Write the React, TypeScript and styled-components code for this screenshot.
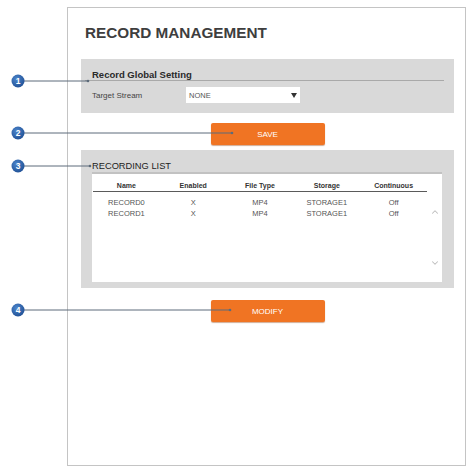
import * as React from "react"
import styled, { createGlobalStyle } from "styled-components"
import { ChevronDown, ChevronUp } from "lucide-react"

const GlobalStyle = createGlobalStyle`
    html, body {
        margin: 0;
        padding: 0;
        background: #ffffff;
    }
    body {
        font-family: "Liberation Sans", Arial, sans-serif;
    }
`

const Page = styled.div`
    position: relative;
    width: 470px;
    height: 471px;
    padding: 7px 0 0 67px;
    box-sizing: border-box;
`

const Frame = styled.div`
    width: 399px;
    height: 459px;
    box-sizing: border-box;
    border: 1px solid #c4c4c4;
    background: #ffffff;
    padding: 17px 11px 0 13px;
    display: flex;
    flex-direction: column;
`

const Title = styled.h1`
    margin: 0 0 18px 4px;
    font-size: 15.3px;
    line-height: 16px;
    font-weight: bold;
    color: #3e3e3e;
`

const Panel = styled.section<{ $padTop: number; $padBottom: number }>`
    background: #d9d9d9;
    padding: ${p => p.$padTop}px 12px ${p => p.$padBottom}px 11px;
    display: flex;
    flex-direction: column;
`

const PanelHeading = styled.div`
    margin: 0 -2px 0 -7px;
    padding-left: 7px;
    font-size: 9.5px;
    line-height: 11px;
    font-weight: bold;
    color: #2a2a2a;
    border-bottom: 1px solid #a9a9a9;
`

const ListHeading = styled.div`
    font-size: 9.3px;
    line-height: 12px;
    color: #222222;
`

const FormRow = styled.div`
    display: flex;
    align-items: center;
    margin-top: 6px;
    height: 16px;
`

const FieldLabel = styled.span`
    width: 94px;
    font-size: 8px;
    color: #444444;
`

const Select = styled.div`
    width: 114px;
    height: 16px;
    box-sizing: border-box;
    background: #ffffff;
    display: flex;
    align-items: center;
    justify-content: space-between;
    padding: 0 3px 0 3px;
    font-size: 7.5px;
    color: #555555;
`

const Caret = styled.span`
    width: 0;
    height: 0;
    border-left: 3.5px solid transparent;
    border-right: 3.5px solid transparent;
    border-top: 5px solid #333333;
`

const ActionButton = styled.button<{ $top: number; $bottom: number }>`
    align-self: center;
    width: 114px;
    height: 22px;
    margin: ${p => p.$top}px 0 ${p => p.$bottom}px;
    border: none;
    border-radius: 2px;
    background: #f07423;
    box-shadow: 0 1px 1px rgba(150, 70, 20, 0.45);
    color: #ffffff;
    font-family: inherit;
    font-size: 8px;
    padding: 0;
`

const ListBox = styled.div`
    height: 110px;
    box-sizing: border-box;
    background: #ffffff;
    border-top: 2px solid #c2c2c2;
    display: flex;
`

const Table = styled.table`
    width: 334px;
    margin: 5px 0 0 1px;
    border-collapse: collapse;
    align-self: flex-start;
    table-layout: fixed;
`

const Th = styled.th`
    font-size: 7px;
    font-weight: bold;
    color: #333333;
    height: 12px;
    padding: 0;
    text-align: center;
    border-bottom: 1px solid #5a5a5a;
`

const Td = styled.td`
    font-size: 7.5px;
    color: #555555;
    height: 11px;
    padding: 0;
    text-align: center;
`

const FirstTd = styled(Td)`
    padding-top: 5px;
`

const ScrollBar = styled.div`
    flex: 1;
    display: flex;
    flex-direction: column;
    align-items: center;
    justify-content: space-between;
    padding: 33px 0 14px;
    color: #bdbdbd;
`

const Callouts = styled.svg`
    position: absolute;
    left: 0;
    top: 0;
    width: 470px;
    height: 471px;
    pointer-events: none;
`

const columns = ["Name", "Enabled", "File Type", "Storage", "Continuous"]
const records = [
    ["RECORD0", "X", "MP4", "STORAGE1", "Off"],
    ["RECORD1", "X", "MP4", "STORAGE1", "Off"],
]

const marks = [
    { n: 1, y: 81, x2: 88 },
    { n: 2, y: 133, x2: 232 },
    { n: 3, y: 166, x2: 90 },
    { n: 4, y: 310, x2: 230 },
]

export default function App() {
    return (
        <Page>
            <GlobalStyle />
            <Frame>
                <Title>RECORD MANAGEMENT</Title>

                <Panel $padTop={10} $padBottom={10}>
                    <PanelHeading>Record Global Setting</PanelHeading>
                    <FormRow>
                        <FieldLabel>Target Stream</FieldLabel>
                        <Select>
                            NONE
                            <Caret />
                        </Select>
                    </FormRow>
                </Panel>

                <ActionButton $top={10} $bottom={5}>SAVE</ActionButton>

                <Panel $padTop={10} $padBottom={6}>
                    <ListHeading>RECORDING LIST</ListHeading>
                    <ListBox>
                        <Table>
                            <thead>
                                <tr>
                                    {columns.map(c => (
                                        <Th key={c}>{c}</Th>
                                    ))}
                                </tr>
                            </thead>
                            <tbody>
                                {records.map((r, i) => (
                                    <tr key={r[0]}>
                                        {r.map((v, j) =>
                                            i === 0 ? <FirstTd key={j}>{v}</FirstTd> : <Td key={j}>{v}</Td>
                                        )}
                                    </tr>
                                ))}
                            </tbody>
                        </Table>
                        <ScrollBar>
                            <ChevronUp size={10} strokeWidth={2.5} />
                            <ChevronDown size={10} strokeWidth={2.5} />
                        </ScrollBar>
                    </ListBox>
                </Panel>

                <ActionButton $top={12} $bottom={0}>MODIFY</ActionButton>
            </Frame>

            <Callouts viewBox="0 0 470 471">
                <defs>
                    <radialGradient id="dot" cx="40%" cy="35%" r="70%">
                        <stop offset="0%" stopColor="#4d86cc" />
                        <stop offset="100%" stopColor="#1f4f94" />
                    </radialGradient>
                </defs>
                {marks.map(m => (
                    <g key={m.n}>
                        <line x1={24} y1={m.y} x2={m.x2} y2={m.y} stroke="#5d6b7a" strokeWidth={1} />
                        <circle cx={m.x2} cy={m.y} r={1.3} fill="#5d6b7a" />
                        <circle cx={18} cy={m.y} r={6.5} fill="url(#dot)" />
                        <text
                            x={18}
                            y={m.y + 3}
                            textAnchor="middle"
                            fontSize={8.5}
                            fontWeight="bold"
                            fill="#ffffff"
                            fontFamily="Liberation Sans, Arial, sans-serif"
                        >
                            {m.n}
                        </text>
                    </g>
                ))}
            </Callouts>
        </Page>
    )
}
